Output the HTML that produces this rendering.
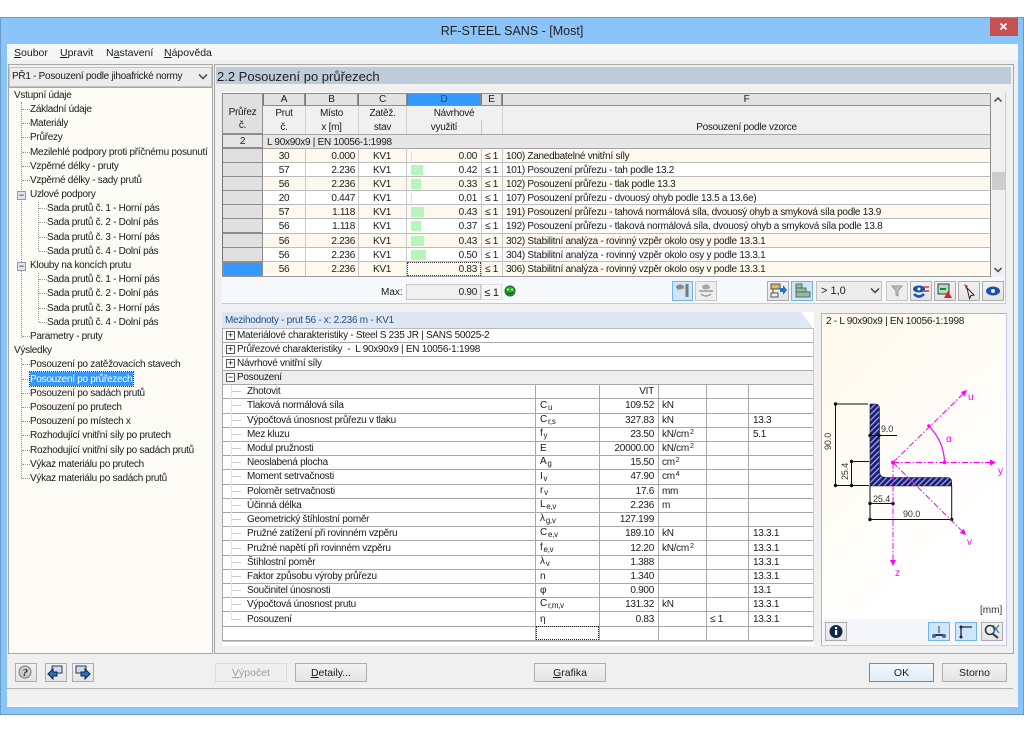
<!DOCTYPE html>
<html><head><meta charset="utf-8"><style>
html,body{margin:0;padding:0;background:#fff}
#p{position:relative;width:1024px;height:733px;overflow:hidden;background:#fff;font:10px/16px "Liberation Sans",sans-serif;letter-spacing:-.28px;color:#1a1a1a}
#p div,#p span.a,#p svg{position:absolute}
.t{white-space:nowrap;height:14px}
.l{background:#a8a8a8}
.h{background:#a4a4a4}
.b{box-sizing:border-box;border:1px solid #adadad;background:linear-gradient(#f2f2f2,#e4e4e4);text-align:center;line-height:18px;white-space:nowrap;font-size:10.5px;letter-spacing:0}
.bb{box-sizing:border-box;border:1px solid #6fb5ec;background:#cfe6f9}
.lt{box-sizing:border-box;border:1px solid #c8c8c8;background:#ededed}
.d{background:none;border-left:1px dotted #999}
.e{border-top:1px dotted #999;height:0}
u{text-decoration:underline}
.pb{width:8px;height:8px;box-sizing:border-box;border:1px solid #555;background:#fff;font:9px/6px "Liberation Sans";text-align:center;color:#000;letter-spacing:0}
sub{font-size:8px;vertical-align:-2px;line-height:0;margin-left:1px}
sup{font-size:7px;vertical-align:3px;line-height:0;margin-left:1px}
.g{background:#b6f5bb;height:10px}
.hc{box-sizing:border-box;background:#e2e2e2;border:1px solid #8e8e8e;border-left:1px solid #777;text-align:center;line-height:12px;height:13px;top:93px}
.sc{background:#f0f0f0;text-align:center;white-space:nowrap;height:14px}
.nb{box-sizing:border-box;left:222px;width:41px;height:14px;background:#e0e0e0;border:1px solid #8c8c8c;border-left:1px solid #777}
</style></head><body><div id="p">

<!-- window frame -->
<div style="left:0;top:17px;width:1024px;height:698px;background:#8ac4f9;border-top:1px solid #6a9cc8;border-bottom:1px solid #6a9cc8;box-sizing:border-box"></div>
<div style="left:0;top:17px;width:1px;height:698px;background:#6a9cc8"></div>
<div style="left:1023px;top:17px;width:1px;height:698px;background:#6a9cc8"></div>
<div class="t" style="left:0;width:1024px;top:23px;text-align:center;font-size:12.5px;line-height:16px;height:16px;color:#222;letter-spacing:0">RF-STEEL SANS - [Most]</div>
<div style="left:990px;top:18px;width:28px;height:18px;background:#c75050"></div>
<svg style="left:990px;top:18px" width="28" height="18"><path d="M10.5 5.5l6 6M16.5 5.5l-6 6" stroke="#fff" stroke-width="1.8" fill="none"/></svg>

<!-- client -->
<div style="left:7px;top:44px;width:1011px;height:663px;background:#f0f0f0"></div>
<div style="left:7px;top:44px;width:1011px;height:16px;background:#f5f6f7"></div>
<div class="t" style="left:14px;top:45px;font-size:10.5px;letter-spacing:0"><u>S</u>oubor</div>
<div class="t" style="left:60px;top:45px;font-size:10.5px;letter-spacing:0"><u>U</u>pravit</div>
<div class="t" style="left:106px;top:45px;font-size:10.5px;letter-spacing:0">N<u>a</u>stavení</div>
<div class="t" style="left:164px;top:45px;font-size:10.5px;letter-spacing:0"><u>N</u>ápověda</div>

<!-- left panel -->
<div style="left:8px;top:64px;width:205px;height:590px;box-sizing:border-box;border:1px solid #a8a8a8;background:#f0f0f0"></div>
<div class="b" style="left:9px;top:67px;width:203px;height:20px;background:#ececec;border-color:#c4c4c4"></div>
<div class="t" style="left:12px;top:69px">PŘ1 - Posouzení podle jihoafrické normy</div>
<svg style="left:198px;top:73px" width="10" height="8"><path d="M1 1.5l4 4 4-4" stroke="#444" stroke-width="1.5" fill="none"/></svg>
<div style="left:9px;top:87px;width:203px;height:566px;background:#fcfbf5;border-top:1px solid #a8a8a8;box-sizing:border-box"></div>

<!-- tree guide lines -->
<div class="d" style="left:21px;top:102px;height:236px"></div>
<div class="d" style="left:38px;top:202px;height:49px"></div>
<div class="d" style="left:38px;top:273px;height:49px"></div>
<div class="d" style="left:21px;top:358px;height:120px"></div>
<div class="e" style="left:22px;top:109px;width:8px"></div><div class="e" style="left:22px;top:123px;width:8px"></div><div class="e" style="left:22px;top:137px;width:8px"></div><div class="e" style="left:22px;top:152px;width:8px"></div><div class="e" style="left:22px;top:166px;width:8px"></div><div class="e" style="left:22px;top:180px;width:8px"></div><div class="e" style="left:22px;top:336px;width:8px"></div>
<div class="e" style="left:39px;top:208px;width:8px"></div><div class="e" style="left:39px;top:222px;width:8px"></div><div class="e" style="left:39px;top:237px;width:8px"></div><div class="e" style="left:39px;top:251px;width:8px"></div>
<div class="e" style="left:39px;top:279px;width:8px"></div><div class="e" style="left:39px;top:293px;width:8px"></div><div class="e" style="left:39px;top:308px;width:8px"></div><div class="e" style="left:39px;top:322px;width:8px"></div>
<div class="e" style="left:22px;top:364px;width:8px"></div><div class="e" style="left:22px;top:379px;width:8px"></div><div class="e" style="left:22px;top:393px;width:8px"></div><div class="e" style="left:22px;top:407px;width:8px"></div><div class="e" style="left:22px;top:421px;width:8px"></div><div class="e" style="left:22px;top:435px;width:8px"></div><div class="e" style="left:22px;top:450px;width:8px"></div><div class="e" style="left:22px;top:464px;width:8px"></div><div class="e" style="left:22px;top:478px;width:8px"></div>
<div class="pb" style="left:17px;top:191px;background:#dfe6ee;border-color:#8b9aa8;width:9px;height:9px;line-height:7px">−</div>
<div class="pb" style="left:17px;top:262px;background:#dfe6ee;border-color:#8b9aa8;width:9px;height:9px;line-height:7px">−</div>

<div class="t" style="left:14px;top:88px">Vstupní údaje</div>
<div class="t" style="left:30px;top:102px">Základní údaje</div>
<div class="t" style="left:30px;top:116px">Materiály</div>
<div class="t" style="left:30px;top:130px">Průřezy</div>
<div class="t" style="left:30px;top:145px">Mezilehlé podpory proti příčnému posunutí</div>
<div class="t" style="left:30px;top:159px">Vzpěrné délky - pruty</div>
<div class="t" style="left:30px;top:173px">Vzpěrné délky - sady prutů</div>
<div class="t" style="left:30px;top:187px">Uzlové podpory</div>
<div class="t" style="left:47px;top:201px">Sada prutů č. 1 - Horní pás</div>
<div class="t" style="left:47px;top:215px">Sada prutů č. 2 - Dolní pás</div>
<div class="t" style="left:47px;top:230px">Sada prutů č. 3 - Horní pás</div>
<div class="t" style="left:47px;top:244px">Sada prutů č. 4 - Dolní pás</div>
<div class="t" style="left:30px;top:258px">Klouby na koncích prutu</div>
<div class="t" style="left:47px;top:272px">Sada prutů č. 1 - Horní pás</div>
<div class="t" style="left:47px;top:286px">Sada prutů č. 2 - Dolní pás</div>
<div class="t" style="left:47px;top:301px">Sada prutů č. 3 - Horní pás</div>
<div class="t" style="left:47px;top:315px">Sada prutů č. 4 - Dolní pás</div>
<div class="t" style="left:30px;top:329px">Parametry - pruty</div>
<div class="t" style="left:14px;top:343px">Výsledky</div>
<div class="t" style="left:30px;top:357px">Posouzení po zatěžovacích stavech</div>
<div class="t" style="left:30px;top:372px;background:#3399ff;color:#fff;width:103px;outline:1px dotted #333">Posouzení po průřezech</div>
<div class="t" style="left:30px;top:386px">Posouzení po sadách prutů</div>
<div class="t" style="left:30px;top:400px">Posouzení po prutech</div>
<div class="t" style="left:30px;top:414px">Posouzení po místech x</div>
<div class="t" style="left:30px;top:428px">Rozhodující vnitřní síly po prutech</div>
<div class="t" style="left:30px;top:443px">Rozhodující vnitřní síly po sadách prutů</div>
<div class="t" style="left:30px;top:457px">Výkaz materiálu po prutech</div>
<div class="t" style="left:30px;top:471px">Výkaz materiálu po sadách prutů</div>

<!-- right area -->
<div style="left:214px;top:64px;width:800px;height:590px;box-sizing:border-box;border:1px solid #a8a8a8;background:#f0f0f0"></div>
<div style="left:216px;top:67px;width:795px;height:17px;background:#bfccda"></div>
<div class="t" style="left:217px;top:68px;font-size:13px;line-height:17px;height:16px;color:#1e1e1e;letter-spacing:0">2.2 Posouzení po průřezech</div>

<!-- top table panel -->
<div style="left:222px;top:276px;width:784px;height:28px;background:#f6f8fc;border-bottom:1px solid #c6c6ee;border-right:1px solid #c6c6ee;box-sizing:border-box"></div>
<div style="left:222px;top:92px;width:769px;height:185px;background:#fff"></div>

<!-- header -->
<div style="left:222px;top:93px;width:41px;height:41px;background:#e0e0e0;border:1px solid #8e8e8e;box-sizing:border-box"></div>
<div style="left:263px;top:106px;width:728px;height:28px;background:#f0f0f0"></div>
<div class="hc" style="left:263px;width:42px">A</div>
<div class="hc" style="left:305px;width:53px">B</div>
<div class="hc" style="left:358px;width:49px">C</div>
<div class="hc" style="left:407px;width:74px;background:#3399ff;color:#1a4f80">D</div>
<div class="hc" style="left:481px;width:21px">E</div>
<div class="hc" style="left:502px;width:489px">F</div>
<div class="t" style="left:222px;width:41px;text-align:center;top:105px">Průřez</div>
<div class="t" style="left:222px;width:41px;text-align:center;top:118px">č.</div>
<div class="t" style="left:263px;width:42px;text-align:center;top:106px">Prut</div>
<div class="t" style="left:263px;width:42px;text-align:center;top:120px">č.</div>
<div class="t" style="left:305px;width:53px;text-align:center;top:106px">Místo</div>
<div class="t" style="left:305px;width:53px;text-align:center;top:120px">x [m]</div>
<div class="t" style="left:358px;width:49px;text-align:center;top:106px">Zatěž.</div>
<div class="t" style="left:358px;width:49px;text-align:center;top:120px">stav</div>
<div class="t" style="left:407px;width:94px;text-align:center;top:106px">Návrhové</div>
<div class="t" style="left:407px;width:74px;text-align:center;top:120px">využití</div>
<div class="t" style="left:502px;width:489px;text-align:center;top:120px">Posouzení podle vzorce</div>
<div class="l" style="left:305px;top:106px;width:1px;height:28px;background:#d0d0d0"></div>
<div class="l" style="left:358px;top:106px;width:1px;height:28px;background:#d0d0d0"></div>
<div class="l" style="left:406px;top:106px;width:1px;height:28px;background:#d0d0d0"></div>
<div class="l" style="left:481px;top:120px;width:1px;height:14px;background:#c8c8c8"></div>
<div class="l" style="left:502px;top:106px;width:1px;height:28px;background:#d0d0d0"></div>
<div class="nb" style="top:134px;text-align:center;line-height:13px;background:#e6e6e6">2</div>
<div style="left:263px;top:134px;width:728px;height:14px;background:#e6e6e6;border-top:1px solid #a8a8a8;box-sizing:border-box"></div>
<div class="t" style="left:267px;top:135px">L 90x90x9 | EN 10056-1:1998</div>

<!-- row backgrounds -->
<div style="left:263px;top:149px;width:728px;height:14px;background:#fdf9ee"></div>
<div style="left:263px;top:177px;width:728px;height:14px;background:#fdf9ee"></div>
<div style="left:263px;top:205px;width:728px;height:14px;background:#fdf9ee"></div>
<div style="left:263px;top:233px;width:728px;height:15px;background:#fdf9ee"></div>
<div style="left:263px;top:262px;width:728px;height:15px;background:#fdf9ee"></div>
<div class="nb" style="top:148px;height:15px"></div><div class="nb" style="top:162px;height:15px"></div><div class="nb" style="top:176px;height:15px"></div><div class="nb" style="top:190px;height:15px"></div><div class="nb" style="top:204px;height:15px"></div><div class="nb" style="top:218px;height:15px"></div><div class="nb" style="top:233px;height:15px"></div><div class="nb" style="top:247px;height:15px"></div>
<div class="nb" style="top:261px;height:16px;background:#3399ff;border-width:2px 1px 1px 2px;border-color:#8c8c8c"></div>

<!-- row lines -->
<div class="h" style="left:263px;top:148px;width:728px;height:1px"></div>
<div class="l" style="left:263px;top:162px;width:728px;height:1px;background:#bcbcbc"></div>
<div class="l" style="left:263px;top:176px;width:728px;height:1px;background:#bcbcbc"></div>
<div class="l" style="left:263px;top:190px;width:728px;height:1px;background:#bcbcbc"></div>
<div class="l" style="left:263px;top:204px;width:728px;height:1px;background:#bcbcbc"></div>
<div class="l" style="left:263px;top:218px;width:728px;height:1px;background:#bcbcbc"></div>
<div class="l" style="left:263px;top:233px;width:728px;height:1px;background:#bcbcbc"></div>
<div class="l" style="left:263px;top:247px;width:728px;height:1px;background:#bcbcbc"></div>
<div class="l" style="left:263px;top:261px;width:728px;height:1px;background:#bcbcbc"></div>
<div class="l" style="left:222px;top:276px;width:769px;height:1px;background:#9c9c9c"></div>
<div class="l" style="left:305px;top:148px;width:1px;height:128px;background:#c8c8c8"></div>
<div class="l" style="left:358px;top:148px;width:1px;height:128px;background:#c8c8c8"></div>
<div class="l" style="left:406px;top:148px;width:1px;height:128px;background:#c8c8c8"></div>
<div class="l" style="left:481px;top:148px;width:1px;height:128px;background:#c8c8c8"></div>
<div class="l" style="left:502px;top:148px;width:1px;height:128px;background:#c8c8c8"></div>
<div class="l" style="left:990px;top:93px;width:1px;height:184px;background:#8e8e8e"></div>

<!-- bars -->
<div class="g" style="left:411px;top:151px;width:1px"></div>
<div class="g" style="left:411px;top:165px;width:12px"></div>
<div class="g" style="left:411px;top:179px;width:10px"></div>
<div class="g" style="left:411px;top:193px;width:1px"></div>
<div class="g" style="left:411px;top:207px;width:13px"></div>
<div class="g" style="left:411px;top:221px;width:10px"></div>
<div class="g" style="left:411px;top:236px;width:13px"></div>
<div class="g" style="left:411px;top:250px;width:15px"></div>
<div style="left:407px;top:262px;width:74px;height:14px;box-sizing:border-box;border:1px dotted #333"></div>

<!-- row text -->
<div class="t" style="left:263px;width:42px;text-align:center;top:149px">30</div><div class="t" style="left:305px;width:50px;text-align:right;top:149px">0.000</div><div class="t" style="left:358px;width:48px;text-align:center;top:149px">KV1</div><div class="t" style="left:407px;width:70px;text-align:right;top:149px">0.00</div><div class="t" style="left:481px;width:21px;text-align:center;top:149px">≤ 1</div><div class="t" style="left:506px;top:149px">100) Zanedbatelné vnitřní síly</div>
<div class="t" style="left:263px;width:42px;text-align:center;top:163px">57</div><div class="t" style="left:305px;width:50px;text-align:right;top:163px">2.236</div><div class="t" style="left:358px;width:48px;text-align:center;top:163px">KV1</div><div class="t" style="left:407px;width:70px;text-align:right;top:163px">0.42</div><div class="t" style="left:481px;width:21px;text-align:center;top:163px">≤ 1</div><div class="t" style="left:506px;top:163px">101) Posouzení průřezu - tah podle 13.2</div>
<div class="t" style="left:263px;width:42px;text-align:center;top:177px">56</div><div class="t" style="left:305px;width:50px;text-align:right;top:177px">2.236</div><div class="t" style="left:358px;width:48px;text-align:center;top:177px">KV1</div><div class="t" style="left:407px;width:70px;text-align:right;top:177px">0.33</div><div class="t" style="left:481px;width:21px;text-align:center;top:177px">≤ 1</div><div class="t" style="left:506px;top:177px">102) Posouzení průřezu - tlak podle 13.3</div>
<div class="t" style="left:263px;width:42px;text-align:center;top:191px">20</div><div class="t" style="left:305px;width:50px;text-align:right;top:191px">0.447</div><div class="t" style="left:358px;width:48px;text-align:center;top:191px">KV1</div><div class="t" style="left:407px;width:70px;text-align:right;top:191px">0.01</div><div class="t" style="left:481px;width:21px;text-align:center;top:191px">≤ 1</div><div class="t" style="left:506px;top:191px">107) Posouzení průřezu - dvouosý ohyb podle 13.5 a 13.6e)</div>
<div class="t" style="left:263px;width:42px;text-align:center;top:205px">57</div><div class="t" style="left:305px;width:50px;text-align:right;top:205px">1.118</div><div class="t" style="left:358px;width:48px;text-align:center;top:205px">KV1</div><div class="t" style="left:407px;width:70px;text-align:right;top:205px">0.43</div><div class="t" style="left:481px;width:21px;text-align:center;top:205px">≤ 1</div><div class="t" style="left:506px;top:205px">191) Posouzení průřezu - tahová normálová síla, dvouosý ohyb a smyková síla podle 13.9</div>
<div class="t" style="left:263px;width:42px;text-align:center;top:219px">56</div><div class="t" style="left:305px;width:50px;text-align:right;top:219px">1.118</div><div class="t" style="left:358px;width:48px;text-align:center;top:219px">KV1</div><div class="t" style="left:407px;width:70px;text-align:right;top:219px">0.37</div><div class="t" style="left:481px;width:21px;text-align:center;top:219px">≤ 1</div><div class="t" style="left:506px;top:219px">192) Posouzení průřezu - tlaková normálová síla, dvouosý ohyb a smyková síla podle 13.8</div>
<div class="t" style="left:263px;width:42px;text-align:center;top:234px">56</div><div class="t" style="left:305px;width:50px;text-align:right;top:234px">2.236</div><div class="t" style="left:358px;width:48px;text-align:center;top:234px">KV1</div><div class="t" style="left:407px;width:70px;text-align:right;top:234px">0.43</div><div class="t" style="left:481px;width:21px;text-align:center;top:234px">≤ 1</div><div class="t" style="left:506px;top:234px">302) Stabilitní analýza - rovinný vzpěr okolo osy y podle 13.3.1</div>
<div class="t" style="left:263px;width:42px;text-align:center;top:248px">56</div><div class="t" style="left:305px;width:50px;text-align:right;top:248px">2.236</div><div class="t" style="left:358px;width:48px;text-align:center;top:248px">KV1</div><div class="t" style="left:407px;width:70px;text-align:right;top:248px">0.50</div><div class="t" style="left:481px;width:21px;text-align:center;top:248px">≤ 1</div><div class="t" style="left:506px;top:248px">304) Stabilitní analýza - rovinný vzpěr okolo osy y podle 13.3.1</div>
<div class="t" style="left:263px;width:42px;text-align:center;top:262px">56</div><div class="t" style="left:305px;width:50px;text-align:right;top:262px">2.236</div><div class="t" style="left:358px;width:48px;text-align:center;top:262px">KV1</div><div class="t" style="left:407px;width:70px;text-align:right;top:262px">0.83</div><div class="t" style="left:481px;width:21px;text-align:center;top:262px">≤ 1</div><div class="t" style="left:506px;top:262px">306) Stabilitní analýza - rovinný vzpěr okolo osy v podle 13.3.1</div>

<!-- scrollbar -->
<div style="left:991px;top:93px;width:14px;height:184px;background:#f0f0f0"></div>
<div style="left:1005px;top:93px;width:1px;height:184px;background:#c6c6ee"></div>
<div style="left:992px;top:172px;width:13px;height:18px;background:#cdcdcd"></div>
<svg style="left:993px;top:96px" width="10" height="8"><path d="M1.5 5.5l3.5-3.5 3.5 3.5" stroke="#444" stroke-width="1.5" fill="none"/></svg>
<svg style="left:993px;top:266px" width="10" height="8"><path d="M1.5 2l3.5 3.5 3.5-3.5" stroke="#444" stroke-width="1.5" fill="none"/></svg>

<!-- max row -->
<div class="t" style="left:381px;top:285px;letter-spacing:0">Max:</div>
<div style="left:406px;top:284px;width:75px;height:16px;box-sizing:border-box;border:1px solid #c8c8c8;background:#f0f0f0"></div>
<div class="t" style="left:407px;width:70px;text-align:right;top:285px">0.90</div>
<div style="left:481px;top:284px;width:21px;height:16px;box-sizing:border-box;border:1px solid #ddd;background:#f8f8f8"></div>
<div class="t" style="left:481px;width:21px;text-align:center;top:285px;font-size:11px">≤ 1</div>
<svg style="left:504px;top:285px" width="12" height="12"><circle cx="6" cy="6" r="5" fill="#2ba52b" stroke="#0b6a20"/><circle cx="4" cy="4.5" r="1" fill="#dfd"/><circle cx="8" cy="4.5" r="1" fill="#dfd"/><path d="M3 7.5q3 2.5 6 0" stroke="#032" fill="none"/></svg>

<!-- toolbar -->
<div class="bb" style="left:672px;top:281px;width:21px;height:20px"></div>
<svg style="left:672px;top:281px" width="21" height="20"><ellipse cx="8" cy="6" rx="4" ry="2.5" fill="#8a8a8a"/><path d="M15 3v13" stroke="#777" stroke-width="3"/><path d="M5 9l8-2" stroke="#aaa"/></svg>
<div class="lt" style="left:695px;top:281px;width:22px;height:20px"></div>
<svg style="left:695px;top:281px" width="22" height="20"><ellipse cx="11" cy="6" rx="4" ry="2.5" fill="#a8a8a8"/><path d="M4 10h14M6 13q5 4 10 0" stroke="#999" stroke-width="1.4" fill="none"/></svg>
<div class="b" style="left:767px;top:281px;width:22px;height:20px"></div>
<svg style="left:767px;top:281px" width="22" height="20"><rect x="4" y="3" width="9" height="5" fill="#d8b860" stroke="#555"/><rect x="4" y="12" width="7" height="4" fill="#eee" stroke="#555"/><path d="M6 8v4" stroke="#555"/><path d="M13 7h3V4l4 5-4 5v-3h-3z" fill="#1e78c8"/></svg>
<div class="bb" style="left:791px;top:281px;width:22px;height:20px"></div>
<svg style="left:791px;top:281px" width="22" height="20"><path d="M5 3h6v4h-6zM5 7h10v4H5zM5 11h14v5H5z" fill="#8fbf9a" stroke="#666"/></svg>
<div class="b" style="left:816px;top:281px;width:66px;height:20px;background:#ececec;border-color:#c0c0c0;text-align:left;padding-left:4px;font-size:11px">&gt; 1,0</div>
<svg style="left:870px;top:287px" width="10" height="8"><path d="M1 1.5l4 4 4-4" stroke="#444" stroke-width="1.5" fill="none"/></svg>
<div class="lt" style="left:886px;top:281px;width:22px;height:20px"></div>
<svg style="left:886px;top:281px" width="22" height="20"><path d="M6 5h10l-4 5v5l-2-1v-4z" fill="#bbb" stroke="#999"/></svg>
<div class="b" style="left:910px;top:281px;width:22px;height:20px"></div>
<svg style="left:910px;top:281px" width="22" height="20"><ellipse cx="9" cy="8" rx="6" ry="3.5" fill="#1c4fb0"/><circle cx="9" cy="8" r="1.5" fill="#fff"/><path d="M4 13q5 5 10 0" stroke="#1c4fb0" stroke-width="2.5" fill="none"/><path d="M13 6h6M13 10h6" stroke="#d33" stroke-width="1.5"/></svg>
<div class="b" style="left:934px;top:281px;width:22px;height:20px"></div>
<svg style="left:934px;top:281px" width="22" height="20"><rect x="4" y="3" width="11" height="10" fill="#b8dcb0" stroke="#336"/><path d="M6 8h6" stroke="#0a8a3a" stroke-width="2"/><path d="M14 10l4 7h-8z" fill="#d22"/></svg>
<div class="b" style="left:958px;top:281px;width:22px;height:20px"></div>
<svg style="left:958px;top:281px" width="22" height="20"><path d="M6 3l4 2-2 3z" fill="#c33"/><path d="M9 7l7 7-3 .5-1.500 3z" fill="#fff" stroke="#222"/></svg>
<div class="b" style="left:982px;top:281px;width:22px;height:20px"></div>
<svg style="left:982px;top:281px" width="22" height="20"><ellipse cx="11" cy="10" rx="7" ry="4.500" fill="#1c4fb0"/><circle cx="11" cy="10" r="2" fill="#def"/></svg>

<!-- lower table -->
<div style="left:222px;top:312px;width:592px;height:334px;background:#fff"></div>
<div style="left:222px;top:312px;width:591px;height:16px;background:#dfe7f5;clip-path:polygon(0 0,98% 0,100% 100%,0 100%)"></div>
<div class="t" style="left:225px;top:313px;color:#23507d">Mezihodnoty - prut 56 - x: 2.236 m - KV1</div>
<div style="left:222px;top:370px;width:591px;height:14px;background:#eeeeee"></div>

<!-- lower rows lines -->
<div class="l" style="left:222px;top:328px;width:591px;height:1px;background:#bbb"></div>
<div class="l" style="left:222px;top:342px;width:591px;height:1px"></div>
<div class="l" style="left:222px;top:356px;width:591px;height:1px"></div>
<div class="l" style="left:222px;top:370px;width:591px;height:1px"></div>
<div class="l" style="left:222px;top:384px;width:591px;height:1px"></div>
<div class="l" style="left:222px;top:398px;width:591px;height:1px"></div>
<div class="l" style="left:222px;top:413px;width:591px;height:1px"></div>
<div class="l" style="left:222px;top:427px;width:591px;height:1px"></div>
<div class="l" style="left:222px;top:441px;width:591px;height:1px"></div>
<div class="l" style="left:222px;top:455px;width:591px;height:1px"></div>
<div class="l" style="left:222px;top:469px;width:591px;height:1px"></div>
<div class="l" style="left:222px;top:484px;width:591px;height:1px"></div>
<div class="l" style="left:222px;top:498px;width:591px;height:1px"></div>
<div class="l" style="left:222px;top:512px;width:591px;height:1px"></div>
<div class="l" style="left:222px;top:526px;width:591px;height:1px"></div>
<div class="l" style="left:222px;top:540px;width:591px;height:1px"></div>
<div class="l" style="left:222px;top:555px;width:591px;height:1px"></div>
<div class="l" style="left:222px;top:569px;width:591px;height:1px"></div>
<div class="l" style="left:222px;top:583px;width:591px;height:1px"></div>
<div class="l" style="left:222px;top:597px;width:591px;height:1px"></div>
<div class="l" style="left:222px;top:611px;width:591px;height:1px"></div>
<div class="l" style="left:222px;top:626px;width:591px;height:1px"></div>
<div class="l" style="left:222px;top:640px;width:591px;height:1px"></div>
<div style="left:222px;top:641px;width:591px;height:1px;background:#c6c6ee"></div>
<div class="l" style="left:222px;top:328px;width:1px;height:313px"></div>
<div class="l" style="left:813px;top:328px;width:1px;height:313px;background:#c6c6ee"></div>
<div class="l" style="left:535px;top:384px;width:1px;height:257px"></div>
<div class="l" style="left:599px;top:384px;width:1px;height:257px"></div>
<div class="l" style="left:658px;top:384px;width:1px;height:257px"></div>
<div class="l" style="left:706px;top:384px;width:1px;height:257px"></div>
<div class="l" style="left:748px;top:384px;width:1px;height:257px"></div>

<div class="pb" style="left:226px;top:331px;width:9px;height:9px;line-height:7px">+</div>
<div class="pb" style="left:226px;top:345px;width:9px;height:9px;line-height:7px">+</div>
<div class="pb" style="left:226px;top:359px;width:9px;height:9px;line-height:7px">+</div>
<div class="pb" style="left:226px;top:373px;width:9px;height:9px;line-height:7px">−</div>
<div class="t" style="left:237px;top:328px">Materiálové charakteristiky - Steel S 235 JR | SANS 50025-2</div>
<div class="t" style="left:237px;top:342px">Průřezové charakteristiky&nbsp; - &nbsp;L 90x90x9 | EN 10056-1:1998</div>
<div class="t" style="left:237px;top:356px">Návrhové vnitřní síly</div>
<div class="t" style="left:237px;top:370px">Posouzení</div>

<div class="e" style="left:231px;top:391px;width:10px;border-top:1px solid #ccc"></div><div class="e" style="left:231px;top:405px;width:10px;border-top:1px solid #ccc"></div><div class="e" style="left:231px;top:420px;width:10px;border-top:1px solid #ccc"></div><div class="e" style="left:231px;top:434px;width:10px;border-top:1px solid #ccc"></div><div class="e" style="left:231px;top:448px;width:10px;border-top:1px solid #ccc"></div><div class="e" style="left:231px;top:462px;width:10px;border-top:1px solid #ccc"></div><div class="e" style="left:231px;top:476px;width:10px;border-top:1px solid #ccc"></div><div class="e" style="left:231px;top:491px;width:10px;border-top:1px solid #ccc"></div><div class="e" style="left:231px;top:505px;width:10px;border-top:1px solid #ccc"></div><div class="e" style="left:231px;top:519px;width:10px;border-top:1px solid #ccc"></div><div class="e" style="left:231px;top:533px;width:10px;border-top:1px solid #ccc"></div><div class="e" style="left:231px;top:548px;width:10px;border-top:1px solid #ccc"></div><div class="e" style="left:231px;top:562px;width:10px;border-top:1px solid #ccc"></div><div class="e" style="left:231px;top:576px;width:10px;border-top:1px solid #ccc"></div><div class="e" style="left:231px;top:590px;width:10px;border-top:1px solid #ccc"></div><div class="e" style="left:231px;top:604px;width:10px;border-top:1px solid #ccc"></div><div class="e" style="left:231px;top:619px;width:10px;border-top:1px solid #ccc"></div>
<div style="left:231px;top:385px;width:1px;height:234px;background:#e4e4e4"></div>

<div class="t" style="left:247px;top:384px">Zhotovit</div><div class="t" style="left:600px;width:54px;text-align:right;top:384px">VIT</div>
<div class="t" style="left:247px;top:398px">Tlaková normálová síla</div><div class="t" style="left:540px;top:398px">C<sub>u</sub></div><div class="t" style="left:600px;width:54px;text-align:right;top:398px">109.52</div><div class="t" style="left:662px;top:398px">kN</div>
<div class="t" style="left:247px;top:413px">Výpočtová únosnost průřezu v tlaku</div><div class="t" style="left:540px;top:412px">C<sub>r,s</sub></div><div class="t" style="left:600px;width:54px;text-align:right;top:413px">327.83</div><div class="t" style="left:662px;top:413px">kN</div><div class="t" style="left:753px;top:413px">13.3</div>
<div class="t" style="left:247px;top:427px">Mez kluzu</div><div class="t" style="left:540px;top:426px">f<sub>y</sub></div><div class="t" style="left:600px;width:54px;text-align:right;top:427px">23.50</div><div class="t" style="left:662px;top:427px">kN/cm<sup>2</sup></div><div class="t" style="left:753px;top:427px">5.1</div>
<div class="t" style="left:247px;top:441px">Modul pružnosti</div><div class="t" style="left:540px;top:441px">E</div><div class="t" style="left:600px;width:54px;text-align:right;top:441px">20000.00</div><div class="t" style="left:662px;top:441px">kN/cm<sup>2</sup></div>
<div class="t" style="left:247px;top:455px">Neoslabená plocha</div><div class="t" style="left:540px;top:454px">A<sub>g</sub></div><div class="t" style="left:600px;width:54px;text-align:right;top:455px">15.50</div><div class="t" style="left:662px;top:455px">cm<sup>2</sup></div>
<div class="t" style="left:247px;top:469px">Moment setrvačnosti</div><div class="t" style="left:540px;top:469px">I<sub>v</sub></div><div class="t" style="left:600px;width:54px;text-align:right;top:469px">47.90</div><div class="t" style="left:662px;top:469px">cm<sup>4</sup></div>
<div class="t" style="left:247px;top:484px">Poloměr setrvačnosti</div><div class="t" style="left:540px;top:483px">r<sub>v</sub></div><div class="t" style="left:600px;width:54px;text-align:right;top:484px">17.6</div><div class="t" style="left:662px;top:484px">mm</div>
<div class="t" style="left:247px;top:498px">Účinná délka</div><div class="t" style="left:540px;top:497px">L<sub>e,v</sub></div><div class="t" style="left:600px;width:54px;text-align:right;top:498px">2.236</div><div class="t" style="left:662px;top:498px">m</div>
<div class="t" style="left:247px;top:512px">Geometrický štíhlostní poměr</div><div class="t" style="left:540px;top:511px">λ<sub>g,v</sub></div><div class="t" style="left:600px;width:54px;text-align:right;top:512px">127.199</div>
<div class="t" style="left:247px;top:526px">Pružné zatížení při rovinném vzpěru</div><div class="t" style="left:540px;top:525px">C<sub>e,v</sub></div><div class="t" style="left:600px;width:54px;text-align:right;top:526px">189.10</div><div class="t" style="left:662px;top:526px">kN</div><div class="t" style="left:753px;top:526px">13.3.1</div>
<div class="t" style="left:247px;top:541px">Pružné napětí při rovinném vzpěru</div><div class="t" style="left:540px;top:540px">f<sub>e,v</sub></div><div class="t" style="left:600px;width:54px;text-align:right;top:541px">12.20</div><div class="t" style="left:662px;top:541px">kN/cm<sup>2</sup></div><div class="t" style="left:753px;top:541px">13.3.1</div>
<div class="t" style="left:247px;top:555px">Štíhlostní poměr</div><div class="t" style="left:540px;top:554px">λ<sub>v</sub></div><div class="t" style="left:600px;width:54px;text-align:right;top:555px">1.388</div><div class="t" style="left:753px;top:555px">13.3.1</div>
<div class="t" style="left:247px;top:569px">Faktor způsobu výroby průřezu</div><div class="t" style="left:540px;top:569px">n</div><div class="t" style="left:600px;width:54px;text-align:right;top:569px">1.340</div><div class="t" style="left:753px;top:569px">13.3.1</div>
<div class="t" style="left:247px;top:583px">Součinitel únosnosti</div><div class="t" style="left:540px;top:583px">φ</div><div class="t" style="left:600px;width:54px;text-align:right;top:583px">0.900</div><div class="t" style="left:753px;top:583px">13.1</div>
<div class="t" style="left:247px;top:597px">Výpočtová únosnost prutu</div><div class="t" style="left:540px;top:596px">C<sub>r,m,v</sub></div><div class="t" style="left:600px;width:54px;text-align:right;top:597px">131.32</div><div class="t" style="left:662px;top:597px">kN</div><div class="t" style="left:753px;top:597px">13.3.1</div>
<div class="t" style="left:247px;top:612px">Posouzení</div><div class="t" style="left:540px;top:612px">η</div><div class="t" style="left:600px;width:54px;text-align:right;top:612px">0.83</div><div class="t" style="left:710px;top:612px">≤ 1</div><div class="t" style="left:753px;top:612px">13.3.1</div>
<div style="left:536px;top:626px;width:63px;height:14px;box-sizing:border-box;border:1px dotted #222"></div>

<!-- section panel -->
<div style="left:821px;top:313px;width:186px;height:333px;box-sizing:border-box;border:1px solid #b4b4b4;border-right-color:#c6c6ee;border-bottom-color:#c6c6ee;background:linear-gradient(135deg,#fdf9ea,#ffffff 70%)"></div>
<div class="t" style="left:826px;top:314px">2 - L 90x90x9 | EN 10056-1:1998</div>
<svg style="left:821px;top:370px" width="186" height="250" viewBox="821 370 186 250">
<defs><pattern id="hh" width="4" height="4" patternUnits="userSpaceOnUse" patternTransform="rotate(45)"><rect width="4" height="4" fill="#1b1b78"/><rect width="1.300" height="4" fill="#9fa8d8"/></pattern>
<marker id="m" markerWidth="8" markerHeight="8" refX="6" refY="3" orient="auto"><path d="M0 0L6 3L0 6z" fill="#f0f"/></marker></defs>
<path d="M870 404H875Q879.500 404 879.500 408.500V471Q879.500 477.500 886 477.500H947Q951.700 477.500 951.700 482V486H870Z" fill="url(#hh)" stroke="#111" stroke-width=".6"/>
<g stroke="#111" stroke-width="1" fill="none">
<path d="M835 404H868M835.500 404V485M835 485.500H869M851.500 461V486M851 461.500H869M870 435.500H897M870 486V520M951.700 486V520M870 519.500H952M870 503.500H894"/>
</g>
<g fill="#111"><circle cx="835.500" cy="404" r="1.700"/><circle cx="835.500" cy="485.500" r="1.700"/><circle cx="851.500" cy="461.500" r="1.700"/><circle cx="851.500" cy="485.500" r="1.700"/><circle cx="870" cy="435.500" r="1.700"/><circle cx="879" cy="435.500" r="1.700"/><circle cx="870" cy="503.500" r="1.700"/><circle cx="893" cy="503.500" r="1.700"/><circle cx="870" cy="519.500" r="1.700"/><circle cx="951.700" cy="519.500" r="1.700"/></g>
<g stroke="#f0f" stroke-width="1" fill="none" stroke-dasharray="6 2 1.500 2">
<path d="M893 462.500H996" marker-end="url(#m)"/>
<path d="M893 462.500L967 390" marker-end="url(#m)"/>
<path d="M893 462.500L966 535" marker-end="url(#m)"/>
<path d="M893 462.500V566" marker-end="url(#m)"/>
</g>
<path d="M929 426Q944 442 944.500 462" stroke="#f0f" stroke-width="1.200" fill="none"/>
<g fill="#f0f"><circle cx="893" cy="462.500" r="2"/><circle cx="929" cy="426" r="1.800"/><circle cx="944.500" cy="462.500" r="1.800"/></g>
<g font-family="Liberation Sans" font-size="9" fill="#333" letter-spacing="-.1">
<text x="881" y="432">9.0</text><text x="873" y="502">25.4</text><text x="903" y="517">90.0</text>
<text transform="translate(831,450) rotate(-90)">90.0</text><text transform="translate(848,480) rotate(-90)">25.4</text>
<text x="980" y="613" font-size="10" letter-spacing="0">[mm]</text></g>
<g font-family="Liberation Sans" font-size="10" fill="#f0f"><text x="968" y="400">u</text><text x="998" y="474">y</text><text x="967" y="545">v</text><text x="895" y="576">z</text><text x="946" y="442">α</text></g>
</svg>
<div style="left:822px;top:619px;width:184px;height:26px;background:#f4f6fa"></div>
<div class="b" style="left:825px;top:622px;width:22px;height:19px"></div>
<svg style="left:825px;top:622px" width="22" height="19"><circle cx="11" cy="9.500" r="6.500" fill="#12284a"/><rect x="10" y="8" width="2.200" height="5" fill="#fff"/><rect x="10" y="5" width="2.200" height="2" fill="#fff"/></svg>
<div class="bb" style="left:928px;top:622px;width:22px;height:19px"></div>
<svg style="left:928px;top:622px" width="22" height="19"><path d="M5 13h12" stroke="#334" stroke-width="2"/><path d="M11 4v7" stroke="#334"/><circle cx="6" cy="14" r="2" fill="#46a"/><circle cx="16" cy="14" r="2" fill="#46a"/></svg>
<div class="bb" style="left:955px;top:622px;width:22px;height:19px"></div>
<svg style="left:955px;top:622px" width="22" height="19"><path d="M6 4v12M6 5h11" stroke="#223" stroke-width="1.300" fill="none"/><circle cx="6" cy="5" r="1.500" fill="#223"/><circle cx="6" cy="15" r="1.500" fill="#223"/></svg>
<div class="b" style="left:981px;top:622px;width:22px;height:19px"></div>
<svg style="left:981px;top:622px" width="22" height="19"><circle cx="9" cy="8" r="4.500" fill="none" stroke="#334" stroke-width="1.600"/><path d="M12 12l5 4" stroke="#334" stroke-width="2"/><path d="M12 3l6 8M18 3l-6 8" stroke="#47a" stroke-width="1.300"/></svg>

<!-- bottom -->
<div class="b" style="left:15px;top:663px;width:22px;height:19px"></div>
<svg style="left:15px;top:663px" width="22" height="19"><circle cx="10" cy="9" r="6" fill="#ccc" stroke="#777"/><text x="7.500" y="13" font-family="Liberation Serif" font-size="11" font-weight="bold" font-style="italic" fill="#224">?</text></svg>
<div class="b" style="left:45px;top:663px;width:22px;height:19px"></div>
<svg style="left:45px;top:663px" width="22" height="19"><rect x="7" y="3" width="10" height="7" fill="#cde" stroke="#335"/><path d="M12 9H8V6l-5 5 5 5v-3h4z" fill="#2a6fc8" stroke="#124"/></svg>
<div class="b" style="left:72px;top:663px;width:22px;height:19px"></div>
<svg style="left:72px;top:663px" width="22" height="19"><rect x="4" y="3" width="10" height="7" fill="#cde" stroke="#335"/><path d="M9 9h4V6l5 5-5 5v-3H9z" fill="#2a6fc8" stroke="#124"/></svg>
<div class="b" style="left:215px;top:663px;width:72px;height:19px;background:#efefef;border-color:#dcdcdc;color:#a0a0a0"><u>V</u>ýpočet</div>
<div class="b" style="left:295px;top:663px;width:72px;height:19px"><u>D</u>etaily...</div>
<div class="b" style="left:534px;top:663px;width:72px;height:19px"><u>G</u>rafika</div>
<div class="b" style="left:869px;top:663px;width:65px;height:19px;border-color:#3c9ae8;background:linear-gradient(#f4f8fc,#e0ecf6)">OK</div>
<div class="b" style="left:942px;top:663px;width:65px;height:19px">Storno</div>
<div style="left:7px;top:688px;width:1006px;height:1px;background:#b4b4b4"></div>
<div style="left:7px;top:705px;width:1011px;height:2px;background:#fafafa"></div>

</div></body></html>
